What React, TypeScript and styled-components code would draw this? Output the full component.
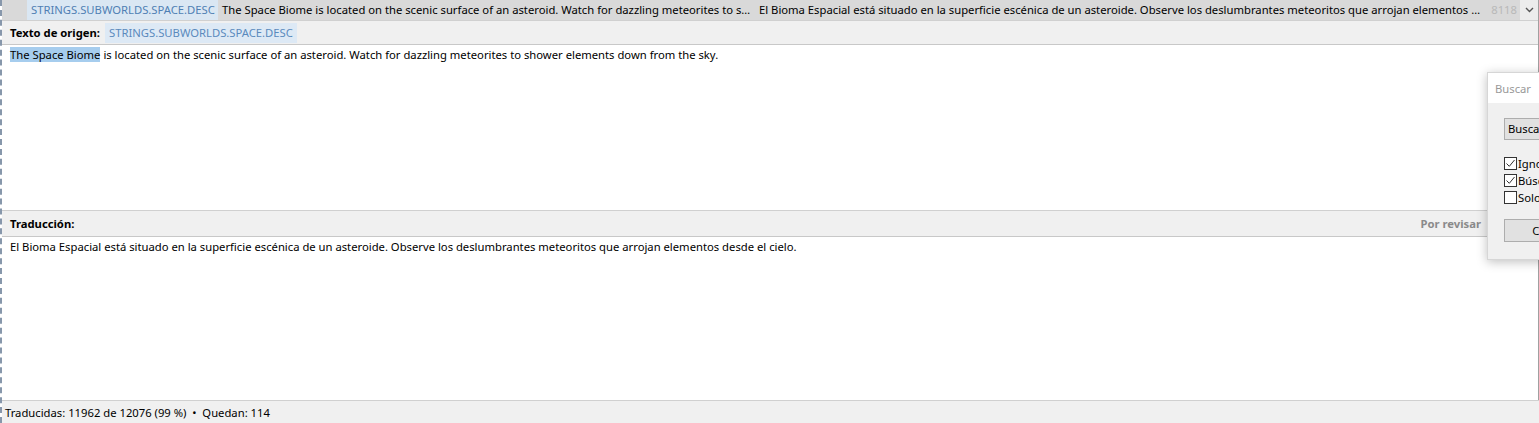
import React from "react";
import styled, { createGlobalStyle } from "styled-components";

const GlobalStyle = createGlobalStyle`
    html, body {
        margin: 0;
        padding: 0;
        background: #ffffff;
    }
    body {
        font-family: "Noto Sans", "Open Sans", sans-serif;
        font-size: 11.25px;
        color: #000000;
    }
`;

const Window = styled.div`
    position: relative;
    width: 1539px;
    height: 423px;
    overflow: hidden;
    display: flex;
    flex-direction: column;
    box-sizing: border-box;
    border-left: 2px dashed #8797ab;
    background: #ffffff;
`;

const ListRow = styled.div`
    display: flex;
    height: 20px;
    align-items: stretch;
    background: #d9d9d9;
    white-space: nowrap;
`;

const Cell = styled.div<{ $w: number; $bg?: string; $color?: string }>`
    width: ${(p) => p.$w}px;
    flex: none;
    padding-left: 4px;
    box-sizing: border-box;
    overflow: hidden;
    text-overflow: ellipsis;
    line-height: 19px;
    background: ${(p) => p.$bg ?? "transparent"};
    color: ${(p) => p.$color ?? "#000000"};
`;

const CountCell = styled.div`
    width: 39px;
    flex: none;
    text-align: right;
    padding-right: 3px;
    box-sizing: border-box;
    line-height: 19px;
    color: #b8b8b8;
`;

const ChevronCell = styled.div`
    flex: 1;
    display: flex;
    align-items: center;
    justify-content: center;
    background: #ececec;
    border-right: 1px solid #a0a0a0;
`;

const Pane = styled.div<{ $h: number }>`
    display: flex;
    flex-direction: column;
    height: ${(p) => p.$h}px;
    flex: none;
    border-right: 1px solid #a0a0a0;
`;

const PaneHeader = styled.div<{ $h: number }>`
    display: flex;
    align-items: center;
    height: ${(p) => p.$h}px;
    flex: none;
    padding: 0 57px 0 8px;
    background: #f0f0f0;
    border-top: 1px solid #d0d0d0;
    border-bottom: 1px solid #c8c8c8;
`;

const Label = styled.span`
    font-weight: 700;
`;

const KeyBadge = styled.span`
    margin-left: 5px;
    padding: 0 4px;
    line-height: 20px;
    background: #dde9f5;
    color: #5a89bd;
`;

const Status = styled.span`
    margin-left: auto;
    font-weight: 700;
    color: #8a8a8a;
`;

const TextArea = styled.div`
    flex: 1;
    padding: 1px 8px;
    line-height: 18px;
    background: #ffffff;
`;

const Selected = styled.span`
    background: #a6cdee;
`;

const StatusBar = styled.div`
    flex: 1;
    display: flex;
    align-items: center;
    padding-left: 3px;
    background: #f0f0f0;
    border-top: 1px solid #d0d0d0;
`;

const Dialog = styled.div`
    position: absolute;
    left: 1485px;
    top: 72px;
    width: 260px;
    height: 186px;
    background: #f0f0f0;
    border: 1px solid #d6d6d6;
    box-shadow: 0 2px 10px rgba(0, 0, 0, 0.25);
    display: flex;
    flex-direction: column;
`;

const DialogTitle = styled.div`
    height: 30px;
    flex: none;
    display: flex;
    align-items: center;
    padding-left: 7px;
    background: #ffffff;
    color: #999999;
`;

const DialogBody = styled.div`
    display: flex;
    flex-direction: column;
    padding: 15px 0 0 16px;
`;

const SearchBox = styled.div`
    width: 200px;
    height: 22px;
    box-sizing: border-box;
    padding-left: 3px;
    line-height: 20px;
    background: #e1e1e1;
    border: 1px solid #adadad;
`;

const CheckList = styled.div`
    display: flex;
    flex-direction: column;
    margin-top: 17px;
    gap: 4px;
`;

const CheckRow = styled.div`
    display: flex;
    align-items: center;
    height: 13px;
    gap: 1px;
    white-space: nowrap;
`;

const Box = styled.span`
    width: 13px;
    height: 13px;
    flex: none;
    box-sizing: border-box;
    border: 1px solid #333333;
    background: #ffffff;
    display: flex;
    align-items: center;
    justify-content: center;
`;

const DialogButton = styled.div`
    margin-top: 15px;
    width: 90px;
    height: 23px;
    box-sizing: border-box;
    display: flex;
    align-items: center;
    justify-content: center;
    background: #e1e1e1;
    border: 1px solid #adadad;
`;

const Check: React.FC<{ on: boolean; label: string }> = ({ on, label }) => (
    <CheckRow>
        <Box>
            {on && (
                <svg width="11" height="11" viewBox="0 0 11 11">
                    <path d="M1.5 5.5 L4.3 8.3 L9.5 2" fill="none" stroke="#333" strokeWidth="1" />
                </svg>
            )}
        </Box>
        <span>{label}</span>
    </CheckRow>
);

export default function App() {
    return (
        <>
            <GlobalStyle />
            <Window>
                <ListRow>
                    <Cell $w={25} />
                    <Cell $w={191} $bg="#dae7f3" $color="#4f7fb3">
                        STRINGS.SUBWORLDS.SPACE.DESC
                    </Cell>
                    <Cell $w={537}>
                        The Space Biome is located on the scenic surface of an asteroid. Watch for dazzling meteorites to shower elements down from the sky.
                    </Cell>
                    <Cell $w={726}>
                        El Bioma Espacial está situado en la superficie escénica de un asteroide. Observe los deslumbrantes meteoritos que arrojan elementos desde el cielo.
                    </Cell>
                    <CountCell>8118</CountCell>
                    <ChevronCell>
                        <svg width="9" height="6" viewBox="0 0 9 6">
                            <path d="M1 1 L4.5 4.5 L8 1" fill="none" stroke="#555" strokeWidth="1.4" />
                        </svg>
                    </ChevronCell>
                </ListRow>
                <Pane $h={190}>
                    <PaneHeader $h={23}>
                        <Label>Texto de origen:</Label>
                        <KeyBadge>STRINGS.SUBWORLDS.SPACE.DESC</KeyBadge>
                    </PaneHeader>
                    <TextArea>
                        <Selected>The Space Biome</Selected> is located on the scenic surface of an asteroid. Watch for dazzling meteorites to shower elements down from the sky.
                    </TextArea>
                </Pane>
                <Pane $h={190}>
                    <PaneHeader $h={25}>
                        <Label>Traducción:</Label>
                        <Status>Por revisar</Status>
                    </PaneHeader>
                    <TextArea>
                        El Bioma Espacial está situado en la superficie escénica de un asteroide. Observe los deslumbrantes meteoritos que arrojan elementos desde el cielo.
                    </TextArea>
                </Pane>
                <StatusBar>Traducidas: 11962 de 12076 (99 %) &nbsp;•&nbsp; Quedan: 114</StatusBar>
                <Dialog>
                    <DialogTitle>Buscar</DialogTitle>
                    <DialogBody>
                        <SearchBox>Buscar</SearchBox>
                        <CheckList>
                            <Check on label="Ignorar mayúsculas" />
                            <Check on label="Búsqueda en claves" />
                            <Check on={false} label="Solo palabras completas" />
                        </CheckList>
                        <DialogButton>Cerrar</DialogButton>
                    </DialogBody>
                </Dialog>
            </Window>
        </>
    );
}
